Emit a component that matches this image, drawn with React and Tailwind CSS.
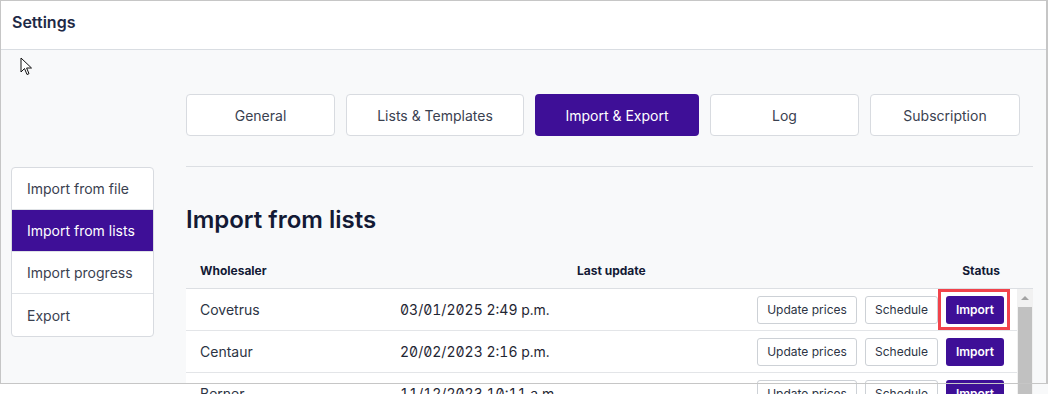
import React from "react";

const tabs = ["General", "Lists & Templates", "Import & Export", "Log", "Subscription"];
const tabWidths = ["w-[149px]", "w-[178px]", "w-[164px]", "w-[149px]", "w-[150px]"];
const sideItems = ["Import from file", "Import from lists", "Import progress", "Export"];
const rows = [
  { name: "Covetrus", date: "03/01/2025 2:49 p.m.", mark: true },
  { name: "Centaur", date: "20/02/2023 2:16 p.m." },
  { name: "Berner", date: "11/12/2023 10:11 a.m." },
];

function Cursor() {
  return (
    <svg width="14" height="20" viewBox="0 0 14 20" className="absolute left-[20px] top-[57px]">
      <path d="M1 1 L1 15 L4.5 11.5 L7 17.5 L9 16.7 L6.6 11 L11.5 11 Z" fill="#fff" stroke="#111" strokeWidth="1" strokeLinejoin="round" />
    </svg>
  );
}

export default function App() {
  return (
    <div className="relative w-[1048px] h-[394px] overflow-hidden bg-[#f8f9fa] font-['Inter',sans-serif]">
      <div className="h-[50px] bg-white border-b border-[#d9dde2] flex items-center pl-[12px] pb-[5px]">
        <span className="text-[16px] font-semibold text-[#1e2946]">Settings</span>
      </div>
      <div className="flex">
        <div className="w-[186px] pl-[11px] pt-[117px] shrink-0">
          <div className="w-[143px] bg-white border border-[#d8dbe0] rounded-[4px] overflow-hidden">
            {sideItems.map((s, i) => (
              <div
                key={s}
                className={
                  "h-[42px] flex items-center pl-[15px] text-[14px] " +
                  (i === 1 ? "bg-[#3e0f97] text-white" : "text-[#3a4150]") +
                  (i === 3 ? "" : " border-b border-[#dfe2e6]")
                }
              >
                {s}
              </div>
            ))}
          </div>
        </div>
        <div className="w-[847px] pt-[44px]">
          <div className="flex gap-[11px]">
            {tabs.map((t, i) => (
              <div
                key={t}
                className={
                  tabWidths[i] +
                  " h-[42px] rounded-[4px] flex items-center justify-center text-[14px] " +
                  (i === 2 ? "bg-[#3e0f97] text-white" : "bg-white border border-[#d8dbe0] text-[#3a4150]")
                }
              >
                {t}
              </div>
            ))}
          </div>
          <div className="mt-[30px] border-t border-[#dcdfe3]" />
          <h1 className="mt-[37px] text-[24px] leading-[32px] font-semibold text-[#131a35]">Import from lists</h1>
          <div className="mt-[18px] h-[35px] flex items-center border-b border-[#dcdfe3] text-[12px] font-bold text-[#131a35]">
            <div className="w-[391px] pl-[14px]">Wholesaler</div>
            <div>Last update</div>
            <div className="flex-1" />
            <div className="pr-[33px]">Status</div>
          </div>
          <div className="flex">
            <div className="w-[831px]">
              {rows.map((r) => (
                <div key={r.name} className="h-[42px] bg-white border-b border-[#e3e5e8] flex items-center">
                  <div className="w-[214px] pl-[14px] text-[14px] text-[#2c3444]">{r.name}</div>
                  <div className="text-[14px] tabular-nums slashed-zero text-[#1f2633]">{r.date}</div>
                  <div className="flex-1 flex justify-end items-center gap-[8px] pr-[13px]">
                    <button className="h-[28px] w-[100px] bg-white border border-[#cdd1d6] rounded-[3px] text-[12px] text-[#2c3444]">Update prices</button>
                    <button className="h-[28px] w-[73px] bg-white border border-[#cdd1d6] rounded-[3px] text-[12px] text-[#2c3444]">Schedule</button>
                    <div className="relative">
                      <button className="h-[28px] w-[58px] bg-[#3e0f97] rounded-[3px] text-[12px] font-semibold text-white">Import</button>
                      {r.mark && (
                        <span className="absolute -left-[8px] -right-[6px] -top-[7px] -bottom-[6px] border-[3px] border-[#f1434b]" />
                      )}
                    </div>
                  </div>
                </div>
              ))}
            </div>
            <div className="w-[16px] bg-[#f1f1f1] flex flex-col items-center">
              <svg width="8" height="6" viewBox="0 0 8 6" className="mt-[6px]">
                <path d="M0 5 L4 1 L8 5 Z" fill="#a3a3a3" />
              </svg>
              <div className="mt-[6px] w-[14px] flex-1 bg-[#c1c1c1]" />
            </div>
          </div>
        </div>
      </div>
      <Cursor />
      <div className="absolute left-0 top-[384px] w-[186px] h-[10px] bg-white" />
      <div className="absolute left-0 top-0 w-[1048px] h-[384px] border border-r-2 border-[#c6c6c6] pointer-events-none" />
    </div>
  );
}
